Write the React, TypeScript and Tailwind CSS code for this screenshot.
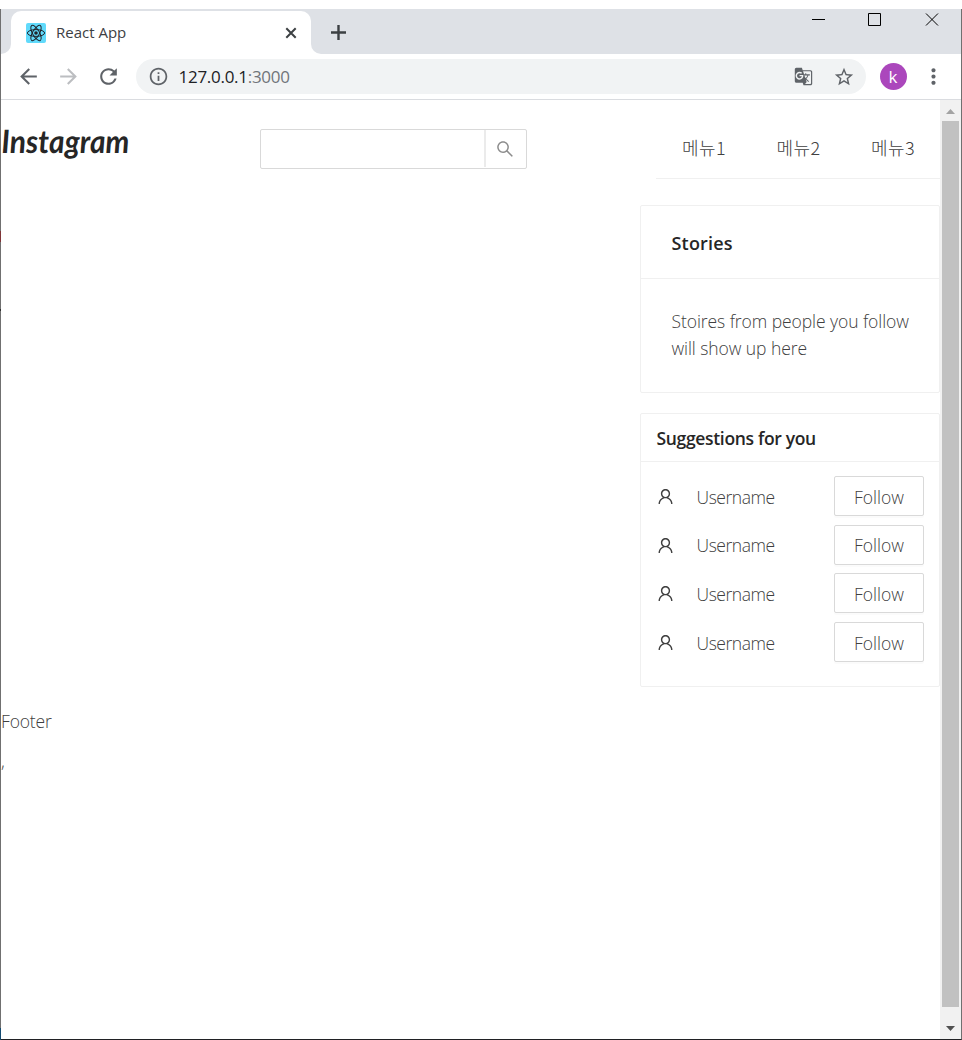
import { AiOutlineSearch, AiOutlineUser } from "react-icons/ai";
import {
  MdArrowBack,
  MdArrowForward,
  MdGTranslate,
  MdInfoOutline,
  MdMoreVert,
  MdRefresh,
  MdStarBorder,
} from "react-icons/md";

const menuItems = ["메뉴1", "메뉴2", "메뉴3"];
const suggestions = ["Username", "Username", "Username", "Username"];

function ReactFavicon() {
  return (
    <svg viewBox="0 0 20 20" className="size-5 shrink-0">
      <rect width="20" height="20" rx="2" fill="#61dafb" />
      <g fill="none" stroke="#20232a" strokeWidth="1">
        <ellipse cx="10" cy="10" rx="8.6" ry="3.4" />
        <ellipse cx="10" cy="10" rx="8.6" ry="3.4" transform="rotate(60 10 10)" />
        <ellipse cx="10" cy="10" rx="8.6" ry="3.4" transform="rotate(120 10 10)" />
      </g>
      <circle cx="10" cy="10" r="1.8" fill="#20232a" />
    </svg>
  );
}

function TabStrip() {
  return (
    <div className="flex h-[45px] shrink-0 bg-[#dee1e6]">
      <div className="w-2.5 bg-white">
        <div className="h-full w-full rounded-br-[10px] bg-[#dee1e6]" />
      </div>
      <div className="mt-0.5 flex h-[43px] w-[300px] items-center rounded-t-[10px] bg-white pl-[15px] pr-[11px]">
        <ReactFavicon />
        <span className="ml-2.5 text-[15px] text-[#3c4043]">React App</span>
        <svg viewBox="0 0 18 18" className="ml-auto size-[18px]" stroke="#3c4043" strokeWidth="2">
          <path d="M4.3 4.3l9.4 9.4M13.7 4.3l-9.4 9.4" />
        </svg>
      </div>
      <div className="flex grow bg-white">
        <div className="flex grow rounded-bl-[10px] bg-[#dee1e6]">
          <svg viewBox="0 0 25 25" className="ml-[15px] mt-[11px] size-[25px]" stroke="#3c4043" strokeWidth="2.4">
            <path d="M12.5 5v15M5 12.5h15" />
          </svg>
          <svg viewBox="0 0 128 14" className="ml-auto mr-[21px] mt-1 h-3.5 w-32" fill="none" stroke="#000">
            <path d="M0 6.5h13M56.5 .5h12v12h-12z" />
            <path d="M114 .5l12 12M126 .5l-12 12" />
          </svg>
        </div>
      </div>
    </div>
  );
}

function Toolbar() {
  return (
    <div className="flex h-[46px] shrink-0 items-center border-b border-[#dadce0] bg-white pl-[15px] text-[#5f6368]">
      <MdArrowBack className="mb-px size-[25px]" />
      <MdArrowForward className="mb-px ml-[15px] size-[25px] text-[#bcbec1]" />
      <MdRefresh className="mb-px ml-[15px] size-[25px]" />
      <div className="ml-[15px] flex h-[35px] w-[730px] items-center rounded-full bg-[#f1f3f4] pl-3 pr-[11px]">
        <MdInfoOutline className="size-[21px]" />
        <span className="ml-[9.5px] text-[17px] tracking-[-0.28px] text-[#202124]">
          127.0.0.1<span className="text-[#70757a]">:3000</span>
        </span>
        <MdGTranslate className="ml-auto size-[19px]" />
        <MdStarBorder className="ml-5 size-[22px]" />
      </div>
      <div className="ml-[13.5px] flex size-[27px] items-center justify-center rounded-full bg-[#ab47bc] text-[17px] text-white">
        k
      </div>
      <MdMoreVert className="mb-px ml-3.5 size-[25px]" />
    </div>
  );
}

function Header() {
  return (
    <header className="flex h-[79px] shrink-0">
      <div className="flex w-[259px] pt-[18px]">
        <svg viewBox="0 0 140 52" className="h-[52px] w-[140px]">
          <text
            x="-0.5"
            y="35"
            fontSize="32"
            fontStyle="italic"
            fontWeight="700"
            fill="#262626"
            textLength="128"
            lengthAdjust="spacingAndGlyphs"
            transform="skewX(2)"
            className="font-[Lato,cursive]"
          >
            Instagram
          </text>
        </svg>
      </div>
      <div className="mt-[29px] flex h-10 w-[267px] rounded-[2px] border border-[#d9d9d9]">
        <div className="mb-px w-[225px] border-r-2 border-[#ebebeb]" />
        <div className="flex grow items-center justify-center pr-0.5 text-[#8c8c8c]">
          <AiOutlineSearch className="size-5" />
        </div>
      </div>
      <nav className="ml-auto flex w-[284px] items-center border-b border-[#f0f0f0] pl-[26px] pt-[17px] text-[18px]">
        {menuItems.map((item) => (
          <span key={item} className="w-[94.5px] shrink-0 font-['Noto_Sans_CJK_KR'] font-light tracking-[0.4px]">
            {item}
          </span>
        ))}
      </nav>
    </header>
  );
}

function StoriesCard() {
  return (
    <section className="h-[188px] rounded-[2px] border border-[#f0f0f0]">
      <h2 className="flex h-[73px] items-center border-b border-[#f0f0f0] pl-[30.5px] pt-px text-lg font-semibold tracking-[0.2px] text-[#262626]">
        Stories
      </h2>
      <p className="whitespace-nowrap pl-[30.5px] pt-[29px] text-[17.5px] leading-[27px] tracking-[-0.07px]">
        Stoires from people you follow
        <br />
        will show up here
      </p>
    </section>
  );
}

function SuggestionsCard() {
  return (
    <section className="mt-5 h-[274px] rounded-[2px] border border-[#f0f0f0]">
      <h2 className="flex h-12 items-center border-b border-[#f0f0f0] pl-[15.5px] pt-0.5 text-[17.5px] font-semibold tracking-[-0.33px] text-[#262626]">
        Suggestions for you
      </h2>
      <ul className="flex flex-col gap-[8.66px] px-[15px] pt-3.5">
        {suggestions.map((name, index) => (
          <li key={index} className="flex h-10 items-center text-[17.5px]">
            <AiOutlineUser className="mt-px size-[19px]" />
            <span className="ml-[21.5px] pt-[1.5px] tracking-[-0.45px]">{name}</span>
            <button className="ml-auto h-10 w-[90px] rounded-[2px] border border-[#d9d9d9] bg-white pt-[1.5px] shadow-[0_2px_0_rgba(0,0,0,0.015)]">
              Follow
            </button>
          </li>
        ))}
      </ul>
    </section>
  );
}

function Scrollbar() {
  return (
    <div className="flex w-[21px] shrink-0 flex-col items-center bg-[#f1f1f1]">
      <svg viewBox="0 0 21 21" className="size-[21px]" fill="#a3a3a3">
        <path d="M6 14l4.5-5 4.5 5z" />
      </svg>
      <div className="mr-px w-[17px] grow bg-[#c1c1c1]" />
      <svg viewBox="0 0 21 32" className="h-8 w-[21px]" fill="#505050">
        <path d="M6 19h9l-4.5 5z" />
      </svg>
    </div>
  );
}

function WindowEdge() {
  return (
    <div className="flex w-px shrink-0 flex-col bg-[#707070]">
      <div className="mt-[222px] h-[11px] bg-[#803538]" />
      <div className="mt-[67px] h-0.5 bg-[#303030]" />
      <div className="mt-auto h-3 bg-[#134a70]" />
    </div>
  );
}

export default function App() {
  return (
    <div className="h-[1040px] w-[962px] bg-white pt-[9px] font-['Open_Sans','Noto_Sans_CJK_KR',sans-serif]">
      <div className="flex h-[1031px]">
        <WindowEdge />
        <div className="flex grow flex-col border-b border-r border-b-[#202124] border-r-[#707070]">
          <TabStrip />
          <Toolbar />
          <div className="flex min-h-0 grow">
            <main className="flex w-[939px] flex-col font-light text-[#404040]">
              <Header />
              <aside className="ml-auto mt-[26px] w-[300px]">
                <StoriesCard />
                <SuggestionsCard />
              </aside>
              <footer className="mt-[21px] text-[17.5px] leading-[27px] tracking-[-0.15px]">Footer</footer>
              <span className="mt-[13px] text-[17.5px] leading-[27px]">,</span>
            </main>
            <Scrollbar />
          </div>
        </div>
      </div>
    </div>
  );
}
